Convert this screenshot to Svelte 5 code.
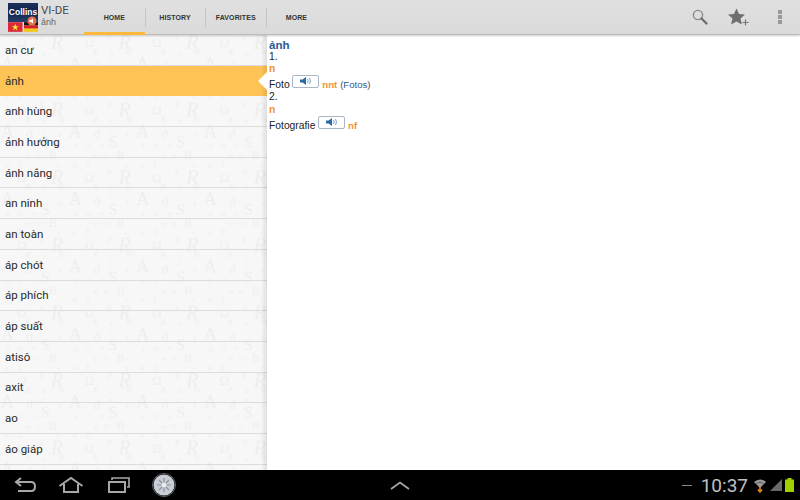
<script>
  let tabs = ["HOME", "HISTORY", "FAVORITES", "MORE"];
  let words = ["an cư", "ảnh", "anh hùng", "ảnh hưởng", "ánh nắng", "an ninh", "an toàn", "áp chót", "áp phích", "áp suất", "atisô", "axit", "ao", "áo giáp"];
  // letters of the faint paper texture: [glyph, x, y, size, italic]
  let marks = [
    ["Ω", 17, 13, 13], ["R", 51, 15, 20, true], ["β", 40, 5, 8], ["Æ", 24, 21, 8], ["W", 58, 21, 8], ["A", 1, 36, 18],
    ["д", 42, 21, 7], ["ϑ", 26, 37, 13], ["r", 42, 30, 7], ["ß", 58, 36, 7], ["S", 41, 46, 16], ["й", 6, 47, 7], ["П", 18, 47, 7],
    ["в", 33, 46, 6], ["B", 49, 58, 12], ["O", 36, 57, 7], ["m", 26, 57, 6], ["K", 5, 66, 7], ["Σ", 18, 66, 8], ["x", 57, 66, 7]
  ];
</script>

<div class="screen">
  <header class="actionbar">
    <div class="logo">
      <div class="cover">Collins</div>
      <div class="flags">
        <svg class="flag" viewBox="0 0 15 10"><rect width="15" height="10" fill="#dc2a38" /><polygon points="7.5,1.5 8.4,4.2 11.2,4.2 8.9,5.9 9.8,8.6 7.5,6.9 5.2,8.6 6.1,5.9 3.8,4.2 6.6,4.2" fill="#fde13c" /></svg>
        <svg class="flag" viewBox="0 0 15 10"><rect width="15" height="3.4" fill="#111" /><rect y="3.4" width="15" height="3.3" fill="#d8201c" /><rect y="6.7" width="15" height="3.3" fill="#f6c816" /></svg>
      </div>
      <svg class="speaker" viewBox="0 0 10 10"><circle cx="5" cy="5" r="4.5" fill="#e8734a" /><path d="M2.5 4H4L6 2.5V7.5L4 6H2.5Z" fill="#fff" /></svg>
    </div>
    <div class="title">
      <div class="dict">VI-DE</div>
      <div class="word">ảnh</div>
    </div>
    <nav class="tabs">
      {#each tabs as tab, i}
        <div class="tab" class:active={i === 0}>{tab}</div>
      {/each}
    </nav>
    <div class="actions">
      <svg viewBox="0 0 18 18" width="18" height="18"><circle cx="7" cy="7" r="4.6" fill="none" stroke="#8a8a8a" stroke-width="1.4" /><path d="M10.5 10.5L15.5 15.5" stroke="#6e6e6e" stroke-width="2.4" stroke-linecap="round" /></svg>
      <svg viewBox="0 0 22 18" width="22" height="18"><polygon points="8.5,0.5 11,6 17,6.6 12.5,10.6 13.9,16.5 8.5,13.4 3.1,16.5 4.5,10.6 0,6.6 6,6" fill="#6e6e6e" /><path d="M17.5 11.5V17.5M14.5 14.5H20.5" stroke="#777" stroke-width="1.2" /></svg>
      <div class="overflow"><i></i><i></i><i></i></div>
    </div>
  </header>

  <main class="content">
    <aside class="list">
      <svg class="paper" width="267" height="435" aria-hidden="true">
        <defs>
          <pattern id="tile" width="67.6" height="67.6" patternUnits="userSpaceOnUse" y="-1">
            {#each marks as m}
              <text x={m[1]} y={m[2]} font-size={m[3]} font-style={m[4] ? "italic" : "normal"} font-family="'Liberation Serif', serif" fill="#ededed">{m[0]}</text>
            {/each}
          </pattern>
        </defs>
        <rect width="267" height="435" fill="url(#tile)" />
      </svg>
      {#each words as word, i}
        <div class="row" class:selected={i === 1}>{word}</div>
      {/each}
      <div class="edge"></div>
      <div class="notch"></div>
    </aside>
    <section class="entry">
      <div class="head">ảnh</div>
      <div>1.</div>
      <div class="pos">n</div>
      <div class="trans">Foto <span class="play"><svg viewBox="0 0 14 10" width="14" height="10"><path d="M1 3.5H3.5L7 1V9L3.5 6.5H1Z" fill="#2f6aa8" /><path d="M8.5 3Q10 5 8.5 7M10.5 2Q12.5 5 10.5 8" fill="none" stroke="#7fa6cc" /></svg></span> <span class="gender">nnt</span> <span class="plural">(<span class="link">Fotos</span>)</span></div>
      <div class="num">2.</div>
      <div class="pos">n</div>
      <div class="trans">Fotografie <span class="play"><svg viewBox="0 0 14 10" width="14" height="10"><path d="M1 3.5H3.5L7 1V9L3.5 6.5H1Z" fill="#2f6aa8" /><path d="M8.5 3Q10 5 8.5 7M10.5 2Q12.5 5 10.5 8" fill="none" stroke="#7fa6cc" /></svg></span> <span class="gender">nf</span></div>
    </section>
  </main>

  <footer class="navbar">
    <div class="softkeys">
      <svg viewBox="0 0 24 18" width="24" height="18"><path d="M7 2L2 6L7 10M2.500 6H17Q21 6 21 10.5Q21 15 17 15H4" fill="none" stroke="#a8a8a8" stroke-width="2" /></svg>
      <svg viewBox="0 0 26 18" width="26" height="18"><path d="M1.5 10L13 2L24.5 10M6 8V16H20V8" fill="none" stroke="#a8a8a8" stroke-width="2" /></svg>
      <svg class="recents" viewBox="0 0 24 18" width="24" height="18"><path d="M5 4V2H22V11H20" fill="none" stroke="#a8a8a8" stroke-width="1.6" /><rect x="2" y="6" width="16" height="10" fill="none" stroke="#a8a8a8" stroke-width="2" /></svg>
      <svg class="gallery" viewBox="0 0 24 24" width="24" height="24"><circle cx="12" cy="12" r="10.5" fill="#c9ced6" /><circle cx="12" cy="12" r="11.5" fill="none" stroke="#5f6672" /><path d="M12 5V19M5 12H19M7 7L17 17M17 7L7 17" stroke="#8a909c" stroke-width="1.2" /><circle cx="12" cy="12" r="2.5" fill="#e8eaee" /></svg>
    </div>
    <svg class="chevron" viewBox="0 0 20 9" width="20" height="9"><path d="M1 8L10 1.5L19 8" fill="none" stroke="#a8a8a8" stroke-width="1.8" /></svg>
    <div class="status">
      <span class="dash"></span>
      <span class="clock">10:37</span>
      <svg viewBox="0 0 14 16" width="14" height="16"><path d="M1 5Q7 0 13 5L7 11Z" fill="#9a9a9a" /><path d="M3.5 6.5Q7 3.5 10.500 6.500" fill="none" stroke="#555" /><path d="M7 9V15M5 12.500L7 15L9 12.500" fill="none" stroke="#e88a1c" stroke-width="1.5" /></svg>
      <svg viewBox="0 0 12 12" width="12" height="12"><polygon points="0,12 12,0 12,12" fill="#6a6a6a" /></svg>
      <svg viewBox="0 0 9 14" width="9" height="14"><rect x="2.500" width="4" height="2" fill="#9fd000" /><rect y="1.500" width="9" height="12.500" fill="#9fd000" /></svg>
    </div>
  </footer>
</div>

<style>
  :global(body) {
    margin: 0;
  }

  .screen {
    width: 800px;
    height: 500px;
    display: flex;
    flex-direction: column;
    overflow: hidden;
    font-family: "Liberation Sans", Arial, sans-serif;
    background: #fff;
  }

  .actionbar {
    flex: 0 0 35px;
    box-sizing: border-box;
    display: flex;
    align-items: flex-start;
    background: linear-gradient(#e0e0e0, #dadada);
    border-bottom: 1px solid #bcbcbc;
    box-shadow: 0 1px 2px rgba(0, 0, 0, 0.2);
    position: relative;
    z-index: 3;
  }

  .logo {
    position: relative;
    margin: 3px 0 0 8px;
    width: 30px;
    height: 30px;
  }

  .cover {
    height: 19px;
    background: linear-gradient(#1c2f5c, #10224a 50%, #27406f);
    color: #fff;
    font-size: 8.5px;
    font-weight: bold;
    line-height: 19px;
    text-align: center;
    overflow: hidden;
  }

  .flags {
    display: flex;
    gap: 1px;
  }

  .flag {
    display: block;
    width: 14.5px;
    height: 10px;
  }

  .speaker {
    position: absolute;
    left: 19px;
    top: 13px;
    width: 10px;
    height: 10px;
  }

  .title {
    width: 43px;
    margin-left: 3px;
    padding-top: 3px;
    color: #4a4a4a;
  }

  .dict {
    font-family: Roboto, "Liberation Sans", sans-serif;
    font-size: 11.5px;
    line-height: 14px;
  }

  .word {
    font-size: 9px;
    line-height: 11px;
    color: #666;
  }

  .tabs {
    display: flex;
    height: 35px;
    margin-bottom: -1px;
  }

  .tab {
    width: 60.7px;
    height: 35px;
    box-sizing: border-box;
    display: flex;
    align-items: center;
    justify-content: center;
    font-size: 7px;
    font-weight: bold;
    color: #333;
    letter-spacing: 0.1px;
    position: relative;
    padding-bottom: 1px;
  }

  .tab + .tab::before {
    content: "";
    position: absolute;
    left: 0;
    top: 8px;
    bottom: 8px;
    width: 1px;
    background: #c4c4c4;
  }

  .tab.active::after {
    content: "";
    position: absolute;
    left: 0;
    right: 0;
    bottom: 0;
    height: 3px;
    background: #fdb93c;
  }

  .actions {
    margin-left: auto;
    display: flex;
    align-items: center;
    gap: 19px;
    height: 34px;
    padding-right: 18px;
  }

  .overflow {
    display: flex;
    flex-direction: column;
    gap: 1px;
    margin-left: 9px;
  }

  .overflow i {
    width: 4px;
    height: 4px;
    background: #999;
  }

  .content {
    flex: 1;
    display: flex;
    min-height: 0;
  }

  .list {
    position: relative;
    flex: 0 0 267px;
    overflow: hidden;
    background: #f7f7f7;
  }

  .paper {
    position: absolute;
    left: 0;
    top: 0;
  }

  .row {
    position: relative;
    box-sizing: border-box;
    height: 30.7px;
    padding-left: 5px;
    display: flex;
    align-items: center;
    border-bottom: 1px solid #dcdcdc;
    font-family: Roboto, "Liberation Sans", sans-serif;
    font-size: 11.5px;
    color: #2a2a2a;
  }

  .row.selected {
    background: #fdc355;
    border-bottom-color: #fdc355;
  }

  .edge {
    position: absolute;
    top: 0;
    bottom: 0;
    right: 0;
    width: 6px;
    background: linear-gradient(to right, rgba(0, 0, 0, 0), rgba(0, 0, 0, 0.1));
  }

  .notch {
    position: absolute;
    right: 0;
    top: 37px;
    width: 0;
    height: 0;
    border-top: 9px solid transparent;
    border-bottom: 9px solid transparent;
    border-right: 9px solid #fff;
  }

  .entry {
    flex: 1;
    padding: 4px 0 0 2px;
    font-size: 10.3px;
    line-height: 12px;
    color: #222;
  }

  .head {
    font-size: 11.5px;
    font-weight: bold;
    color: #2a5a95;
  }

  .num {
    margin-bottom: 1px;
  }

  .pos {
    color: #f29233;
    font-weight: bold;
  }

  .trans {
    height: 12px;
    padding-top: 4px;
  }

  .play {
    display: inline-flex;
    align-items: center;
    justify-content: center;
    box-sizing: border-box;
    width: 27px;
    height: 13px;
    margin-top: -8px;
    vertical-align: 2px;
    background: #fff;
    border: 1px solid #a9b6c6;
    border-radius: 2px;
  }

  .gender {
    color: #f29233;
    font-weight: bold;
    font-size: 9.6px;
  }

  .plural {
    color: #3a4a60;
    font-size: 9.6px;
  }

  .link {
    color: #2f5c94;
  }

  .navbar {
    flex: 0 0 30px;
    display: flex;
    align-items: center;
    position: relative;
    background: #000;
  }

  .softkeys {
    display: flex;
    align-items: center;
    gap: 20px;
    padding-left: 14px;
  }

  .recents {
    margin-left: 3px;
  }

  .gallery {
    margin-left: 1px;
  }

  .chevron {
    position: absolute;
    left: 390px;
    top: 11px;
  }

  .status {
    margin-left: auto;
    display: flex;
    align-items: center;
    gap: 3px;
    padding-right: 6px;
  }

  .dash {
    width: 10px;
    height: 1px;
    background: #888;
    margin-right: 6px;
  }

  .clock {
    color: #c0c0c0;
    font-family: Roboto, "Liberation Sans", sans-serif;
    font-size: 19px;
    margin-right: 2px;
  }
</style>
